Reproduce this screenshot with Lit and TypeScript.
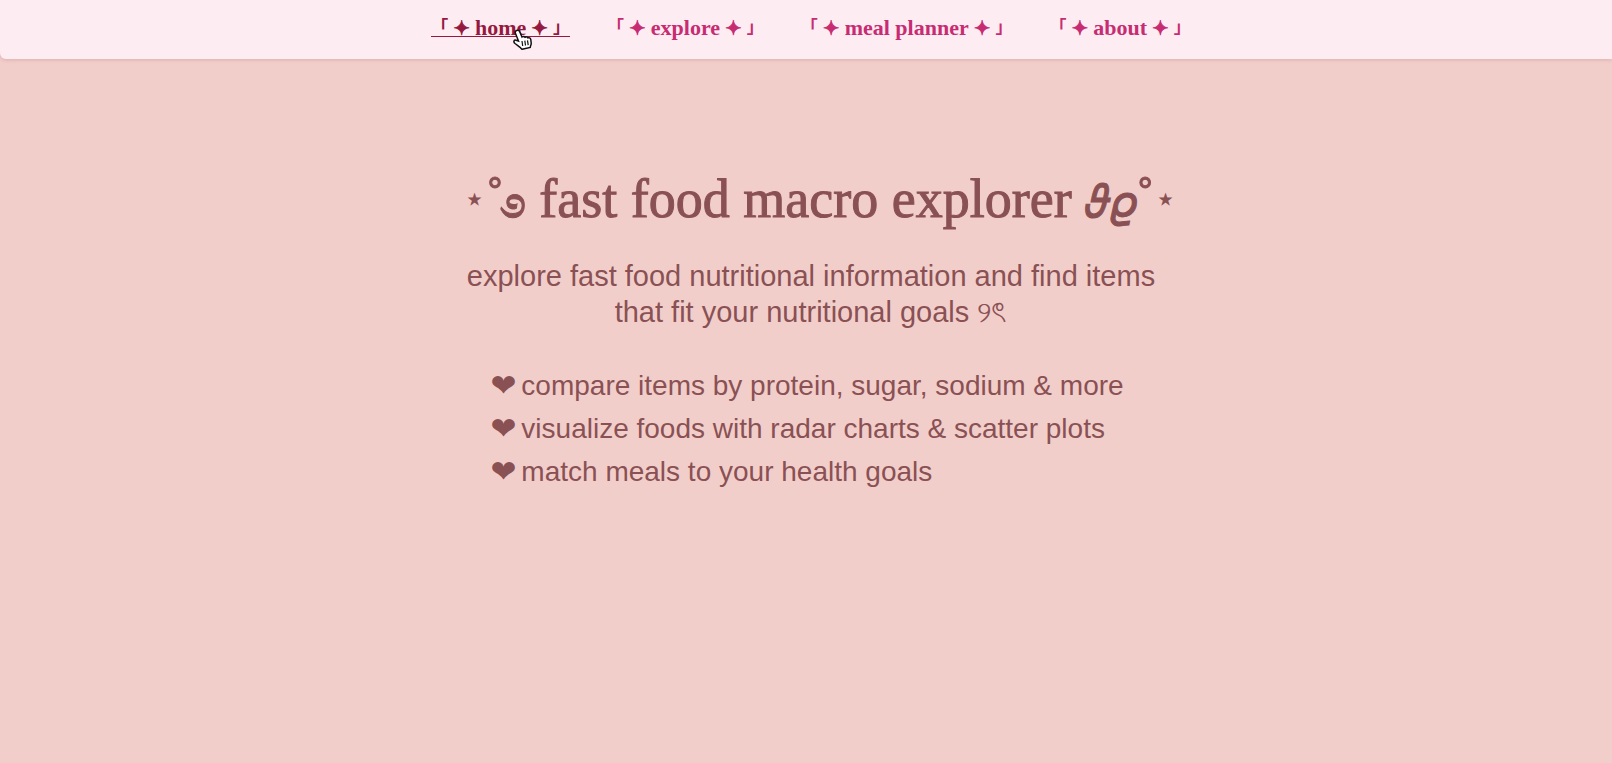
import { LitElement, html, css } from "lit";
import { customElement } from "lit/decorators.js";

const LINKS = ["home", "explore", "meal planner", "about"];
const FEATURES = [
  "compare items by protein, sugar, sodium & more",
  "visualize foods with radar charts & scatter plots",
  "match meals to your health goals",
];

@customElement("app-root")
export class AppRoot extends LitElement {
  static styles = css`
    :host {
      display: block;
      min-height: 100vh;
      background: #f2cecb;
      color: #8a5154;
      font-family: "Liberation Sans", "Noto Sans", "DejaVu Sans", sans-serif;
    }
    header {
      background: #feecf3;
      border-radius: 0 0 0 6px;
      box-shadow: 0 1px 4px rgba(120, 60, 60, 0.2);
      padding: 19px 0 22px 10px;
    }
    nav {
      display: flex;
      justify-content: center;
      gap: 37px;
    }
    a {
      position: relative;
      display: flex;
      gap: 5px;
      font: bold 22px/18px "Liberation Serif", "DejaVu Sans", "Noto Sans CJK JP", serif;
      color: #c72c72;
      text-decoration: none;
      white-space: nowrap;
    }
    .bracket {
      font-size: 17px;
    }
    .spark {
      -webkit-text-stroke: 1px currentColor;
      font-size: 20px;
    }
    .active {
      color: #95193f;
      box-shadow: 0 -1px 0 #95193f inset;
    }
    .cursor {
      position: absolute;
      left: 82px;
      top: 10px;
      width: 19px;
      height: 21px;
    }
    main {
      display: flex;
      flex-direction: column;
      align-items: center;
      padding: 110px 0 48px 10px;
    }
    h1 {
      margin: 0;
      padding-left: 18px;
      font: 54px/60px "Liberation Serif", "DejaVu Sans", serif;
      -webkit-text-stroke: 1px currentColor;
    }
    .star {
      font-size: 36px;
      line-height: 0;
      vertical-align: 6px;
      -webkit-text-stroke: 0;
    }
    .swirl {
      font-size: 50px;
      line-height: 0;
      vertical-align: sub;
    }
    .curls {
      font-size: 46px;
      line-height: 0;
    }
    p {
      margin: 29px 0 0;
      max-width: 700px;
      text-align: center;
      font-size: 29px;
      line-height: 36px;
    }
    ul {
      list-style: none;
      margin: 34px 0 0;
      padding: 0 8px 0 0;
      font-size: 28px;
      line-height: 43px;
    }
    li {
      display: flex;
      gap: 5px;
    }
    .heart {
      font-size: 31px;
    }
  `;

  render() {
    return html`
      <header>
        <nav aria-label="Main">
          ${LINKS.map(
            (name, i) => html`<a class=${i === 0 ? "active" : ""} href="#${name.replace(" ", "-")}"
              ><span class="bracket">「</span><span class="spark">✦</span><span>${name}</span><span class="spark">✦</span><span class="bracket">」</span>${i === 0
                ? html`<svg class="cursor" viewBox="0 0 19 21" aria-hidden="true"><path d="M3.5 1.5C5 .7 6.200 1.500 6.800 3L9 8c1-.9 2.200-.7 3 .3 1-.8 2.200-.5 2.800.6 1.500-.6 2.700.2 3 1.800l.4 3.300c.2 2-.9 2.700-1 4.500L9 20.300C7.500 18 4.500 16.500 2 14.500c-2-1.700-1-3.800 1-3.300L5.500 12 2.500 4.500C2 3.200 2.300 2 3.500 1.500z" fill="#fff" stroke="#111" stroke-width="1.5"/><path d="M9 12l.7 5M11.800 11.700l.7 4.800M14.500 11.300l.7 4.800" fill="none" stroke="#111" stroke-width="1.200"/></svg>`
                : ""}</a>`
          )}
        </nav>
      </header>
      <main>
        <h1><span class="star">⋆</span>˚<span class="swirl">࿔</span> fast food macro explorer <span class="curls">𝜗𝜚</span>˚<span class="star">⋆</span></h1>
        <p>explore fast food nutritional information and find items that fit your nutritional goals ୨ৎ</p>
        <ul>
          ${FEATURES.map((text) => html`<li><span class="heart">❤︎</span><span>${text}</span></li>`)}
        </ul>
      </main>
    `;
  }
}
